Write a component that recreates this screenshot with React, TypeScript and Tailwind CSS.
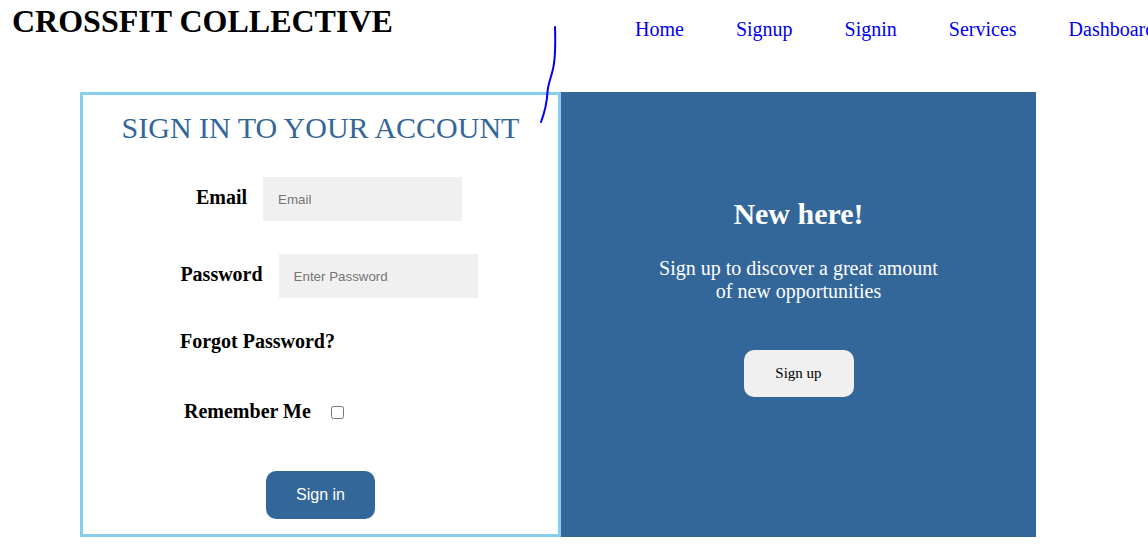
import React from "react";

/* -------------------------------------------------------------------------- */
/*  Header                                                                     */
/* -------------------------------------------------------------------------- */

const NAV_LINKS = ["Home", "Signup", "Signin", "Services", "Dashboard"];

function Header() {
  return (
    <header className="flex h-[92px] items-start whitespace-nowrap">
      <div className="w-[635px] shrink-0 pl-[12px] pt-[3px]">
        <h1 className="text-[32px] leading-[37px] font-bold text-black">CROSSFIT COLLECTIVE</h1>
      </div>
      <nav className="mt-[18px] flex shrink-0 gap-[52px] text-[20px] leading-[23px]">
        {NAV_LINKS.map((label) => (
          <a key={label} href="#" className="text-[#0000ee] no-underline">
            {label}
          </a>
        ))}
      </nav>
    </header>
  );
}

/* -------------------------------------------------------------------------- */
/*  Sign in form                                                               */
/* -------------------------------------------------------------------------- */

function Field({ label, placeholder, type }: { label: string; placeholder: string; type: string }) {
  return (
    <div className="flex items-center justify-center gap-[16px] pl-[17px]">
      <label className="-mt-[3px] text-[20px] leading-[23px] font-bold text-black">{label}</label>
      <input
        type={type}
        placeholder={placeholder}
        className="h-[44px] w-[199px] bg-[#f0f0f0] pl-[15px] font-['Liberation_Sans',Arial,sans-serif] text-[13.33px] text-black outline-none placeholder:text-[#757575]"
      />
    </div>
  );
}

function SignInPanel() {
  return (
    <div className="flex h-[445px] w-[481px] shrink-0 flex-col border-[3px] border-[#87ceeb] bg-white">
      <h2 className="mt-[15px] text-center text-[30px] leading-[35px] text-[#336699]">
        SIGN IN TO YOUR ACCOUNT
      </h2>

      <div className="mt-[32px]">
        <Field label="Email" placeholder="Email" type="email" />
      </div>
      <div className="mt-[33px]">
        <Field label="Password" placeholder="Enter Password" type="password" />
      </div>

      <p className="mt-[32px] pl-[97px] text-[20px] leading-[23px] font-bold text-black">Forgot Password?</p>

      <div className="mt-[47px] flex items-center pl-[101px]">
        <span className="text-[20px] leading-[23px] font-bold text-black">Remember Me</span>
        <input type="checkbox" className="ml-[20px] mt-[2px] h-[13px] w-[13px]" />
      </div>

      <div className="mt-[48px] flex justify-center">
        <button className="h-[48px] w-[109px] rounded-[10px] bg-[#336699] font-['Liberation_Sans',Arial,sans-serif] text-[16px] text-white">
          Sign in
        </button>
      </div>
    </div>
  );
}

/* -------------------------------------------------------------------------- */
/*  Sign up teaser                                                             */
/* -------------------------------------------------------------------------- */

function SignUpPanel() {
  return (
    <div className="flex h-[445px] w-[475px] shrink-0 flex-col items-center bg-[#336699] pt-[104px] text-white">
      <h2 className="text-[30px] leading-[35px] font-bold">New here!</h2>
      <p className="mt-[26px] w-[290px] text-center text-[20px] leading-[23px]">
        Sign up to discover a great amount of new opportunities
      </p>
      <button className="mt-[47px] h-[47px] w-[110px] rounded-[10px] bg-[#f0f0f0] text-[15px] text-black">
        Sign up
      </button>
    </div>
  );
}

/* -------------------------------------------------------------------------- */
/*  Page                                                                       */
/* -------------------------------------------------------------------------- */

export default function App() {
  return (
    <div className="relative h-[559px] w-full overflow-hidden bg-white font-['Liberation_Serif','Times_New_Roman',serif]">
      <Header />

      <main className="ml-[80px] flex">
        <SignInPanel />
        <SignUpPanel />
      </main>

      {/* stray pen stroke over the form corner */}
      <svg
        className="pointer-events-none absolute left-[536px] top-[22px]"
        width="24"
        height="106"
        viewBox="0 0 24 106"
        fill="none"
      >
        <path
          d="M19 5 C19.5 20 19 38 17 47 C15 56 12 62 11.5 70 C11 80 8 92 5 100"
          stroke="#0000ff"
          strokeWidth="2"
          strokeLinecap="round"
        />
      </svg>
    </div>
  );
}
